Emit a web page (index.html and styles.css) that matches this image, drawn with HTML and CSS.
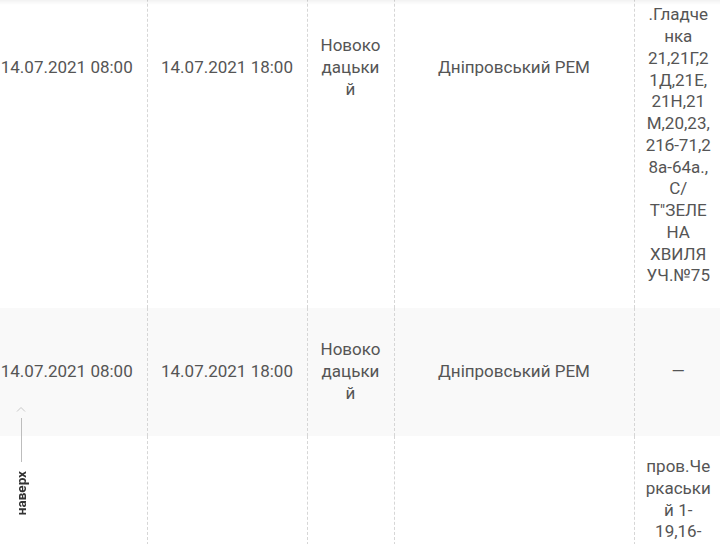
FILE: index.html
```html
<!DOCTYPE html>
<html lang="uk">
<head>
<meta charset="utf-8">
<title>Відключення</title>
<link rel="stylesheet" href="styles.css">
</head>
<body>
<div class="viewport">
  <table class="outages">
    <colgroup>
      <col class="c-start"><col class="c-end"><col class="c-area"><col class="c-rem"><col class="c-addr">
    </colgroup>
    <tbody>
      <tr class="row-first">
        <td>14.07.2021 08:00</td>
        <td>14.07.2021 18:00</td>
        <td class="narrow">Новокодацький</td>
        <td>Дніпровський РЕМ</td>
        <td class="narrow addr-bottom">.Гладченка 21,21Г,21Д,21Е,21Н,21М,20,23,21б-71,28а-64а., С/ Т"ЗЕЛЕНА ХВИЛЯ УЧ.№75</td>
      </tr>
      <tr class="row-alt">
        <td>14.07.2021 08:00</td>
        <td>14.07.2021 18:00</td>
        <td class="narrow">Новокодацький</td>
        <td>Дніпровський РЕМ</td>
        <td class="narrow">—</td>
      </tr>
      <tr class="row-last">
        <td></td>
        <td></td>
        <td class="narrow"></td>
        <td></td>
        <td class="narrow">пров.Черкаський 1-19,16-24а</td>
      </tr>
    </tbody>
  </table>
</div>
<div class="top-shadow"></div>
<a class="to-top" href="#">
  <svg class="chev" width="10" height="6" viewBox="0 0 10 6"><path d="M1 5.5 L5 1.5 L9 5.5" fill="none" stroke="#c8c8c8" stroke-width="1"/></svg>
  <span class="to-top-line"></span>
  <span class="to-top-text">наверх</span>
</a>
</body>
</html>
```

FILE: styles.css
```css
html, body {
  margin: 0;
  padding: 0;
  background: #fff;
}

body {
  font-family: Roboto, "Noto Sans", "Liberation Sans", sans-serif;
  color: #555;
  overflow: hidden;
  height: 544px;
}

.viewport {
  width: 720px;
  height: 544px;
  overflow: hidden;
}

.outages {
  border-collapse: collapse;
  table-layout: fixed;
  width: 735px;
  margin-left: -13px;
  margin-top: -172px;
  font-size: 17px;
  line-height: 21.75px;
}

.c-start { width: 160px; }
.c-end { width: 160px; }
.c-area { width: 87px; }
.c-rem { width: 240px; }
.c-addr { width: 88px; }

.outages td {
  text-align: center;
  vertical-align: middle;
  padding: 20px 12px;
  overflow-wrap: anywhere;
}

.outages td + td {
  border-left: 1px dashed #d6d6d6;
}

.outages td.narrow {
  padding-left: 11px;
  padding-right: 11px;
}

.row-first {
  height: 480px;
}

.row-first td.addr-bottom {
  vertical-align: bottom;
  padding-bottom: 21px;
}

.row-alt {
  height: 128px;
  background: #f9f9f9;
}

.row-last {
  height: 200px;
}

.row-last td {
  vertical-align: top;
}

.top-shadow {
  position: fixed;
  left: 0;
  top: 0;
  width: 720px;
  height: 5px;
  background: linear-gradient(to bottom, rgba(0,0,0,0.05), rgba(0,0,0,0));
  pointer-events: none;
}

.to-top {
  position: fixed;
  left: 11px;
  top: 406px;
  width: 20px;
  display: flex;
  flex-direction: column;
  align-items: center;
  text-decoration: none;
}

.chev {
  display: block;
}

.to-top-line {
  display: block;
  width: 1px;
  height: 44px;
  margin-top: 6px;
  background: #bdbdbd;
}

.to-top-text {
  margin-top: 9px;
  writing-mode: vertical-rl;
  transform: rotate(180deg);
  font-family: Roboto, "Liberation Sans", sans-serif;
  font-weight: 700;
  font-size: 13.5px;
  line-height: 15px;
  color: #333;
}
```
